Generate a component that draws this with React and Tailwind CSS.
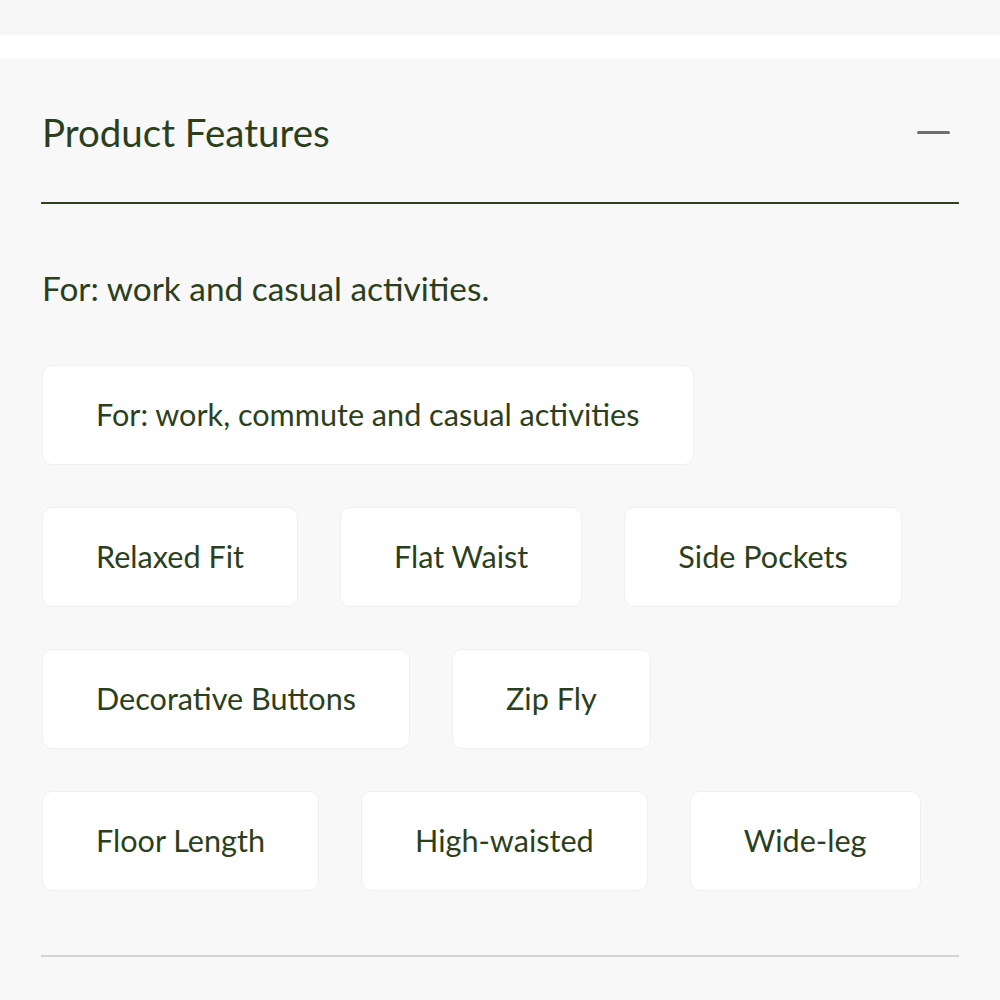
import React from "react";

const rows = [
  ["For: work, commute and casual activities"],
  ["Relaxed Fit", "Flat Waist", "Side Pockets"],
  ["Decorative Buttons", "Zip Fly"],
  ["Floor Length", "High-waisted", "Wide-leg"],
];

export default function App() {
  return (
    <div className="w-[1000px] h-[1000px] overflow-hidden bg-[#f8f8f8]" style={{ fontFamily: "Lato, 'Noto Sans', sans-serif" }}>
      <div className="h-[35px] bg-[#f6f6f6]" />
      <div className="h-[23px] bg-white" />
      <div className="px-[41px] text-[#2b3f1d]">
        <div className="h-[146px] flex items-center justify-between border-b-2 border-[#2e4221] pt-[4px]">
          <h2 className="text-[38.5px] leading-none pl-[1px]">Product Features</h2>
          <div className="w-[33px] h-[3px] rounded-full bg-[#707070] mr-[9px]" />
        </div>
        <p className="mt-[66px] text-[33.4px] leading-[36px] pl-[1px]">For: work and casual activities.</p>
        <div className="mt-[59px] flex flex-col gap-[42px] pl-[1px]">
          {rows.map((row, i) => (
            <div key={i} className="flex gap-[42px]">
              {row.map((t) => (
                <div key={t} className="h-[100px] px-[53px] flex items-center bg-white rounded-[10px] border border-[#efefef] text-[30.6px] whitespace-nowrap">
                  {t}
                </div>
              ))}
            </div>
          ))}
        </div>
        <div className="mt-[64px] h-[2px] bg-[#d3d5d1]" />
      </div>
    </div>
  );
}
